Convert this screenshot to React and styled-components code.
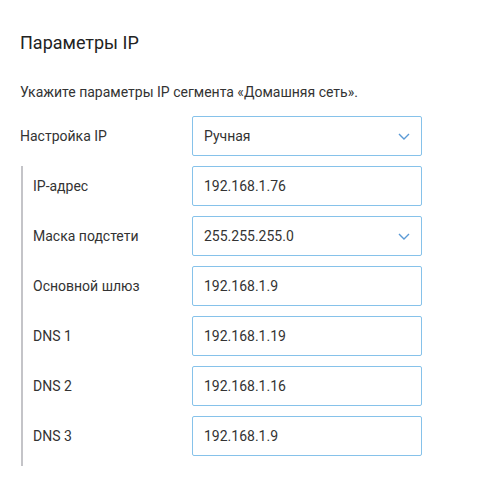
import styled, { createGlobalStyle } from 'styled-components'

const GlobalStyle = createGlobalStyle`
  body{
    margin: 0;
    background: #fff;
    font-family: Roboto, "Liberation Sans", sans-serif;
    color: #333;
  }
`

const Page = styled.div`
  width: 477px;
  height: 493px;
  box-sizing: border-box;
  padding: 28px 20px 0 20px;
`

const Title = styled.h2`
  margin: 0;
  font-size: 18px;
  font-weight: 400;
  line-height: 30px;
  color: #222;
`

const Description = styled.p`
  margin: 25px 0 15px;
  font-size: 14px;
  line-height: 18px;
  color: #333;
`

const Row = styled.div`
  display: flex;
  align-items: center;
`

const Label = styled.span`
  width: ${p => p.$width}px;
  flex-shrink: 0;
  font-size: 14px;
  color: #333;
`

const Group = styled.div`
  display: flex;
  flex-direction: column;
  gap: 10px;
  margin: 10px 0 0 1px;
  padding: 0 0 10px 10px;
  border-left: 2px solid #c4c4c8;
`

const Field = styled.div`
  width: 230px;
  height: 40px;
  box-sizing: border-box;
  border: 1px solid #86c2ea;
  border-radius: 2px;
  padding: 0 11px;
  display: flex;
  align-items: center;
  justify-content: space-between;
  font-size: 14px;
  color: #333;
`

function Chevron() {
  return (
    <svg width='12' height='7' viewBox='0 0 12 7' fill='none'>
      <path d='M1 1l5 5 5-5' stroke='#5a9ad6' strokeWidth='1.4' />
    </svg>
  )
}

const rows = [
  { label: 'IP-адрес', value: '192.168.1.76' },
  { label: 'Маска подстети', value: '255.255.255.0', select: true },
  { label: 'Основной шлюз', value: '192.168.1.9' },
  { label: 'DNS 1', value: '192.168.1.19' },
  { label: 'DNS 2', value: '192.168.1.16' },
  { label: 'DNS 3', value: '192.168.1.9' },
]

export default function App() {
  return (
    <>
      <GlobalStyle />
      <Page>
        <Title>Параметры IP</Title>
        <Description>Укажите параметры IP сегмента «Домашняя сеть».</Description>
        <Row>
          <Label $width={172}>Настройка IP</Label>
          <Field>Ручная<Chevron /></Field>
        </Row>
        <Group>
          {rows.map(r => (
            <Row key={r.label}>
              <Label $width={159}>{r.label}</Label>
              <Field>{r.value}{r.select && <Chevron />}</Field>
            </Row>
          ))}
        </Group>
      </Page>
    </>
  )
}
